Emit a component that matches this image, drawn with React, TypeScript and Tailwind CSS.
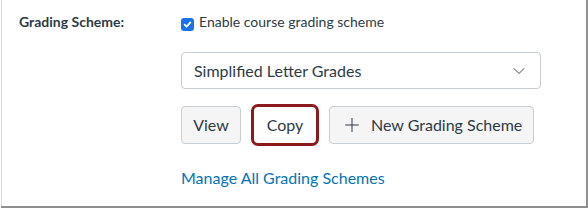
import { ChevronDown, Plus } from "lucide-react";

export default function App() {
  return (
    <div className="w-[588px] h-[209px] bg-white" style={{ fontFamily: "Lato, 'Open Sans', sans-serif" }}>
      <div className="w-[585px] h-[206px] ml-[1px] border-l border-[#d8d8d8] shadow-[1px_1px_0_1px_#8f8f8f] bg-white flex text-[#2d3b45]">
        <div className="w-[179px] pl-[17px] pt-[13px] text-[14px] font-bold leading-[18px]">
          Grading Scheme:
        </div>
        <div className="flex flex-col pt-[13px]">
          <label className="flex items-center gap-[5px] text-[14px] leading-[18px]">
            <span className="w-[13px] h-[13px] mt-[4px] rounded-[3px] bg-[#1a73e8] flex items-center justify-center">
              <svg width="9" height="9" viewBox="0 0 10 10" fill="none">
                <path d="M1.8 5.2 L4 7.4 L8.2 2.6" stroke="white" strokeWidth="1.9" strokeLinecap="round" strokeLinejoin="round" />
              </svg>
            </span>
            Enable course grading scheme
          </label>
          <div className="mt-[21px] w-[360px] h-[37px] border border-[#c7cdd1] rounded-[4px] flex items-center justify-between pl-[12px] pr-[11px] text-[16px]">
            <span>Simplified Letter Grades</span>
            <ChevronDown size={20} strokeWidth={1.1} className="text-[#2d3b45]" />
          </div>
          <div className="mt-[15px] flex items-center gap-[10px]">
            <button className="w-[60px] h-[38px] bg-[#f5f5f5] border border-[#c7cdd1] rounded-[4px] text-[16px]">
              View
            </button>
            <div className="w-[68px] h-[42px] border-[3px] border-[#8b1a1d] rounded-[7px] flex items-center justify-center">
              <span className="text-[16px]">Copy</span>
            </div>
            <button className="w-[205px] h-[38px] bg-[#f5f5f5] border border-[#c7cdd1] rounded-[4px] text-[16px] flex items-center pl-[11px] gap-[8px]">
              <Plus size={22} strokeWidth={1.1} />
              New Grading Scheme
            </button>
          </div>
          <a className="mt-[22px] text-[16px] text-[#0374b5] leading-[20px]">Manage All Grading Schemes</a>
        </div>
      </div>
    </div>
  );
}
